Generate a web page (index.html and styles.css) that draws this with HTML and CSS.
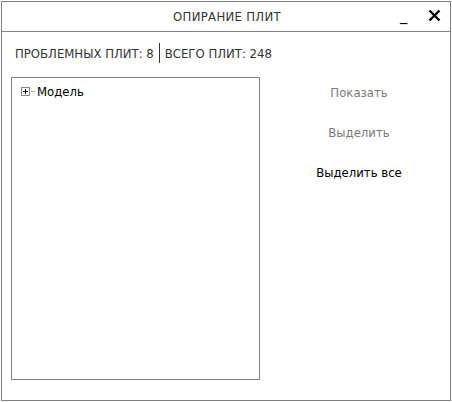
FILE: index.html
```html
<!DOCTYPE html>
<html lang="ru">
<head>
<meta charset="utf-8">
<title>Опирание плит</title>
<link rel="stylesheet" href="styles.css">
</head>
<body>
  <div class="window">
    <div class="titlebar">
      <span class="title">ОПИРАНИЕ ПЛИТ</span>
      <span class="btn-min">_</span>
      <span class="btn-close">
        <svg width="13" height="13" viewBox="0 0 13 13"><path d="M1.5 1.5 L11.5 11.5 M11.5 1.5 L1.5 11.5" stroke="#000" stroke-width="2.4" fill="none"/></svg>
      </span>
    </div>
    <div class="content">
      <div class="stats">
        <span>ПРОБЛЕМНЫХ ПЛИТ: 8</span>
        <span class="sep"></span>
        <span>ВСЕГО ПЛИТ: 248</span>
      </div>
      <div class="main">
        <div class="tree">
          <div class="node">
            <span class="expander">
              <svg width="9" height="9" viewBox="0 0 9 9"><rect x="0.5" y="0.5" width="8" height="8" fill="#fff" stroke="#8a8a8a"/><path d="M2 4.5 H7 M4.5 2 V7" stroke="#000"/></svg>
            </span>
            <span class="dots"></span>
            <span class="label">Модель</span>
          </div>
        </div>
        <div class="actions">
          <span class="action disabled">Показать</span>
          <span class="action disabled">Выделить</span>
          <span class="action">Выделить все</span>
        </div>
      </div>
    </div>
  </div>
</body>
</html>
```

FILE: styles.css
```css
body {
    margin: 0;
    background: #fff;
    font-family: "DejaVu Sans Condensed", "Liberation Sans Narrow", sans-serif;
}
.window {
    box-sizing: border-box;
    width: 450px;
    height: 400px;
    margin: 1px 0 0 1px;
    border: 1px solid #808080;
    background: #fff;
    display: flex;
    flex-direction: column;
}
.titlebar {
    height: 29px;
    border-bottom: 1px solid #808080;
    display: flex;
    align-items: center;
    position: relative;
}
.title {
    flex: 1;
    text-align: center;
    font-size: 13px;
    color: #333;
    letter-spacing: 0.3px;
    padding-left: 2px;
}
.btn-min {
    position: absolute;
    left: 398px;
    top: 3px;
    font-size: 16px;
    color: #000;
}
.btn-close {
    position: absolute;
    left: 426px;
    top: 7px;
    line-height: 0;
}
.content {
    flex: 1;
    padding: 11px 0 0 9px;
    display: flex;
    flex-direction: column;
}
.stats {
    display: flex;
    align-items: center;
    gap: 5px;
    padding-left: 4px;
    font-size: 13px;
    color: #333;
    height: 20px;
}
.sep {
    width: 1px;
    height: 20px;
    background: #333;
}
.main {
    display: flex;
    margin-top: 14px;
}
.tree {
    box-sizing: border-box;
    width: 249px;
    height: 303px;
    border: 1px solid #808080;
    padding: 7px 0 0 9px;
}
.node {
    display: flex;
    align-items: center;
    height: 12px;
}
.expander {
    line-height: 0;
}
.dots {
    width: 4px;
    margin: 0 2px 0 1px;
    border-top: 1px dotted #8a8a8a;
}
.label {
    font-size: 13px;
    color: #000;
}
.actions {
    flex: 1;
    display: flex;
    flex-direction: column;
    align-items: center;
    gap: 20px;
    padding: 6px 0 0 8px;
}
.action {
    font-size: 13px;
    color: #000;
    line-height: 20px;
}
.action.disabled {
    color: #7a7a7a;
}
```
